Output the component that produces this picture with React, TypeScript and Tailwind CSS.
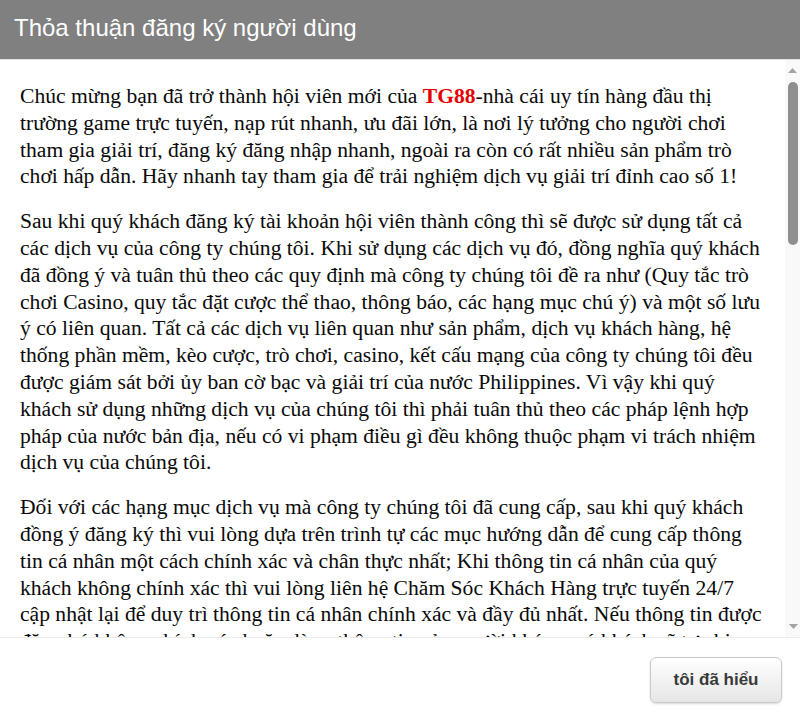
import React from "react";

export default function App() {
  return (
    <div className="w-[800px] h-[715px] flex flex-col bg-white overflow-hidden">
      <div className="h-[60px] shrink-0 bg-[#808080] border-b border-[#e3e3e3] flex items-center pl-[14px] pb-[4px]">
        <h1 className="text-white text-[24px] font-['Liberation_Sans',Arial,sans-serif] font-normal">
          Thỏa thuận đăng ký người dùng
        </h1>
      </div>
      <div className="flex-1 min-h-0 flex">
        <div className="flex-1 min-w-0 overflow-hidden pl-[20px] pr-[20px] pt-[23px] font-['Liberation_Serif','Times_New_Roman',serif] text-[21.6px] leading-[26.8px] text-[#0a0a0a]">
          <p className="mb-[18px]">
            Chúc mừng bạn đã trở thành hội viên mới của{" "}
            <b className="text-[#e60000]">TG88</b>-nhà cái uy tín hàng đầu thị trường game trực
            tuyến, nạp rút nhanh, ưu đãi lớn, là nơi lý tưởng cho người chơi tham gia giải trí, đăng
            ký đăng nhập nhanh, ngoài ra còn có rất nhiều sản phẩm trò chơi hấp dẫn. Hãy nhanh tay
            tham gia để trải nghiệm dịch vụ giải trí đỉnh cao số 1!
          </p>
          <p className="mb-[18px]">
            Sau khi quý khách đăng ký tài khoản hội viên thành công thì sẽ được sử dụng tất cả các
            dịch vụ của công ty chúng tôi. Khi sử dụng các dịch vụ đó, đồng nghĩa quý khách đã đồng
            ý và tuân thủ theo các quy định mà công ty chúng tôi đề ra như (Quy tắc trò chơi Casino,
            quy tắc đặt cược thể thao, thông báo, các hạng mục chú ý) và một số lưu ý có liên quan.
            Tất cả các dịch vụ liên quan như sản phẩm, dịch vụ khách hàng, hệ thống phần mềm, kèo
            cược, trò chơi, casino, kết cấu mạng của công ty chúng tôi đều được giám sát bởi ủy ban
            cờ bạc và giải trí của nước Philippines. Vì vậy khi quý khách sử dụng những dịch vụ của
            chúng tôi thì phải tuân thủ theo các pháp lệnh hợp pháp của nước bản địa, nếu có vi phạm
            điều gì đều không thuộc phạm vi trách nhiệm dịch vụ của chúng tôi.
          </p>
          <p className="mb-[18px]">
            Đối với các hạng mục dịch vụ mà công ty chúng tôi đã cung cấp, sau khi quý khách đồng ý
            đăng ký thì vui lòng dựa trên trình tự các mục hướng dẫn để cung cấp thông tin cá nhân
            một cách chính xác và chân thực nhất; Khi thông tin cá nhân của quý khách không chính xác
            thì vui lòng liên hệ Chăm Sóc Khách Hàng trực tuyến 24/7 cập nhật lại để duy trì thông
            tin cá nhân chính xác và đầy đủ nhất. Nếu thông tin được đăng ký không chính xác hoặc
            dùng thông tin của người khác, quý khách sẽ tự chịu mọi trách nhiệm phát sinh.
          </p>
        </div>
        <div className="w-[15px] shrink-0 bg-[#f9f9f9] flex flex-col items-center">
          <div className="h-[20px] flex items-center justify-center pr-[1px]">
            <svg width="9" height="5" viewBox="0 0 9 5">
              <polygon points="0,5 9,5 4.5,0" fill="#a3a3a3" />
            </svg>
          </div>
          <div className="w-[10px] h-[163px] rounded-full bg-[#8f8f8f] mt-[2px]" />
          <div className="flex-1" />
          <div className="h-[20px] flex items-center justify-center pl-[2px] pb-[2px]">
            <svg width="9" height="5" viewBox="0 0 9 5">
              <polygon points="0,0 9,0 4.5,5" fill="#a3a3a3" />
            </svg>
          </div>
        </div>
      </div>
      <div className="h-[78px] shrink-0 border-t border-[#ececec] flex justify-end items-start pt-[19px] pr-[18px]">
        <button className="w-[132px] h-[46px] rounded-[6px] border border-[#c9c9c9] bg-gradient-to-b from-[#ffffff] to-[#e6e6e6] shadow-[0_1px_2px_rgba(0,0,0,0.15)] text-[#3a3a3a] text-[17px] font-bold font-['Liberation_Sans',Arial,sans-serif]">
          tôi đã hiểu
        </button>
      </div>
    </div>
  );
}
